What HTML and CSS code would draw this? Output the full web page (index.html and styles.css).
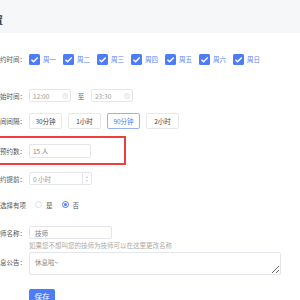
FILE: index.html
```html
<!DOCTYPE html>
<html lang="zh-CN">
<head>
    <meta charset="UTF-8">
    <title>预约设置</title>
    <link rel="stylesheet" href="styles.css">
</head>
<body>
<div class="header">
    <span class="title">预约设置</span>
</div>
<div class="form">
    <div class="row row-days">
        <div class="label">可预约时间：</div>
        <div class="days">
            <span class="day"><i class="check"><svg viewBox="0 0 10 10"><path d="M2.2 5.2 L4.2 7.1 L7.9 3.2"/></svg></i>周一</span>
            <span class="day"><i class="check"><svg viewBox="0 0 10 10"><path d="M2.2 5.2 L4.2 7.1 L7.9 3.2"/></svg></i>周二</span>
            <span class="day"><i class="check"><svg viewBox="0 0 10 10"><path d="M2.2 5.2 L4.2 7.1 L7.9 3.2"/></svg></i>周三</span>
            <span class="day"><i class="check"><svg viewBox="0 0 10 10"><path d="M2.2 5.2 L4.2 7.1 L7.9 3.2"/></svg></i>周四</span>
            <span class="day"><i class="check"><svg viewBox="0 0 10 10"><path d="M2.2 5.2 L4.2 7.1 L7.9 3.2"/></svg></i>周五</span>
            <span class="day"><i class="check"><svg viewBox="0 0 10 10"><path d="M2.2 5.2 L4.2 7.1 L7.9 3.2"/></svg></i>周六</span>
            <span class="day"><i class="check"><svg viewBox="0 0 10 10"><path d="M2.2 5.2 L4.2 7.1 L7.9 3.2"/></svg></i>周日</span>
        </div>
    </div>
    <div class="row row-time">
        <div class="label">每天开始时间：</div>
        <div class="input time">12:00<svg class="clock" viewBox="0 0 10 10"><circle cx="5" cy="5" r="4"/><path d="M5 2.8 V5 L6.4 6"/></svg></div>
        <span class="to">至</span>
        <div class="input time">23:30<svg class="clock" viewBox="0 0 10 10"><circle cx="5" cy="5" r="4"/><path d="M5 2.8 V5 L6.4 6"/></svg></div>
    </div>
    <div class="row row-interval">
        <div class="label">时间间隔：</div>
        <div class="seg">
            <span class="seg-btn">30分钟</span>
            <span class="seg-btn">1小时</span>
            <span class="seg-btn active">90分钟</span>
            <span class="seg-btn">2小时</span>
        </div>
    </div>
    <div class="row row-count">
        <div class="label">每段预约数：</div>
        <div class="input count">15 人</div>
    </div>
    <div class="row row-advance">
        <div class="label">最少预约提前：</div>
        <div class="input number">0 小时<span class="spin"><b class="up"></b><b class="down"></b></span></div>
    </div>
    <div class="row row-radio">
        <div class="label">是否选择有项</div>
        <span class="radio"><i class="dot"></i>是</span>
        <span class="radio on"><i class="dot"></i>否</span>
    </div>
    <div class="row row-name">
        <div class="label">技师名称：</div>
        <div class="input name">技师</div>
    </div>
    <div class="row row-hint">
        <div class="label"></div>
        <div class="hint">如果您不想叫您的技师为技师可以在这里更改名称</div>
    </div>
    <div class="row row-notice">
        <div class="label">休息公告：</div>
        <textarea class="notice">休息啦~</textarea>
    </div>
    <div class="row row-save">
        <div class="label"></div>
        <div class="btn-save">保存</div>
    </div>
</div>
</body>
</html>
```
FILE: styles.css
```css
html, body {
    margin: 0;
    padding: 0;
}
body {
    font-family: "Noto Sans CJK SC", "Noto Sans", sans-serif;
    font-size: 6.5px;
    color: #555;
    background: #fff;
    overflow: hidden;
}
.header {
    height: 33px;
    padding-top: 6px;
    box-sizing: border-box;
    background: #f6f7f9;
    display: flex;
    align-items: center;
}
.title {
    margin-left: -37px;
    font-size: 10px;
    font-weight: bold;
    color: #333;
}
.form {
    margin-left: -50px;
    padding-top: 20px;
}
.row {
    display: flex;
    align-items: center;
}
.label {
    width: 79px;
    box-sizing: border-box;
    padding-right: 3px;
    text-align: right;
    flex: none;
    color: #555;
}

/* 行距 */
.row-days { height: 12px; margin-bottom: 24px; }
.row-time { height: 13px; margin-bottom: 11px; }
.row-interval { height: 16px; margin-bottom: 7px; }
.row-count { height: 29px; margin-bottom: 7px; }
.row-advance { height: 13px; margin-bottom: 13px; }
.row-radio { height: 13px; margin-bottom: 15px; }
.row-name { height: 13px; margin-bottom: 3px; }
.row-hint { height: 7px; margin-bottom: 3px; }
.row-notice { align-items: flex-start; margin-bottom: 14px; }

/* 星期 */
.days {
    display: flex;
}
.day {
    width: 34px;
    display: flex;
    align-items: center;
    color: #5a84f4;
}
.check {
    width: 11px;
    height: 11px;
    margin-right: 3px;
    border-radius: 1.5px;
    background: #4d7cf6;
    display: flex;
}
.check svg {
    width: 11px;
    height: 11px;
    fill: none;
    stroke: #fff;
    stroke-width: 1.3;
}

/* 输入框 */
.input {
    height: 13px;
    box-sizing: border-box;
    border: 1px solid #e4e6eb;
    border-radius: 2px;
    padding-left: 3px;
    color: #999;
    display: flex;
    align-items: center;
    background: #fff;
}
.time {
    width: 42px;
    justify-content: space-between;
    padding-right: 2px;
}
.clock {
    width: 6px;
    height: 6px;
    fill: none;
    stroke: #c4c7cc;
    stroke-width: 0.9;
}
.to {
    width: 20px;
    text-align: center;
    color: #666;
}
.count {
    width: 62px;
    height: 14px;
    color: #888;
}
.number {
    width: 63px;
    position: relative;
}
.spin {
    position: absolute;
    right: 0;
    top: 0;
    bottom: 0;
    width: 8px;
    border-left: 1px solid #e4e6eb;
    display: flex;
    flex-direction: column;
    align-items: center;
    justify-content: center;
    gap: 2px;
}
.spin b {
    width: 0;
    height: 0;
    border-left: 1.5px solid transparent;
    border-right: 1.5px solid transparent;
}
.spin .up { border-bottom: 2px solid #c4c7cc; }
.spin .down { border-top: 2px solid #c4c7cc; }
.name {
    width: 83px;
    padding-left: 5px;
    color: #777;
}

/* 时间间隔 */
.seg {
    display: flex;
    gap: 6px;
}
.seg-btn {
    width: 33px;
    height: 16px;
    box-sizing: border-box;
    border: 1px solid #e8e8e8;
    border-radius: 2px;
    display: flex;
    align-items: center;
    justify-content: center;
    color: #444;
}
.seg-btn.active {
    border-color: #98b2f8;
    color: #4d7cf6;
}

/* 红框 */
.row-count {
    width: 176px;
    box-sizing: border-box;
    border: 2px solid #f03c3c;
}
.row-count .label {
    width: 77px;
}

/* 单选 */
.radio {
    display: flex;
    align-items: center;
    margin-left: 6px;
    margin-right: 3px;
    color: #555;
}
.dot {
    width: 7px;
    height: 7px;
    box-sizing: border-box;
    border: 1px solid #dcdfe5;
    border-radius: 50%;
    margin-right: 4px;
    display: flex;
    align-items: center;
    justify-content: center;
}
.radio.on .dot {
    border-color: #4d7cf6;
}
.radio.on .dot::after {
    content: "";
    width: 3px;
    height: 3px;
    border-radius: 50%;
    background: #4d7cf6;
}

.hint {
    color: #aaa;
    line-height: 7px;
}
.row-notice .label {
    padding-top: 5px;
}
.notice {
    width: 252px;
    height: 23px;
    box-sizing: border-box;
    margin: 0;
    padding: 4px 5px;
    border: 1px solid #e4e6eb;
    border-radius: 2px;
    font-family: "Noto Sans CJK SC", "Noto Sans", sans-serif;
    font-size: 6.5px;
    color: #888;
    outline: none;
}
.btn-save {
    width: 26px;
    height: 15px;
    border-radius: 2px;
    background: #4d7cf6;
    color: #fff;
    font-size: 7.5px;
    display: flex;
    align-items: center;
    justify-content: center;
}
```
